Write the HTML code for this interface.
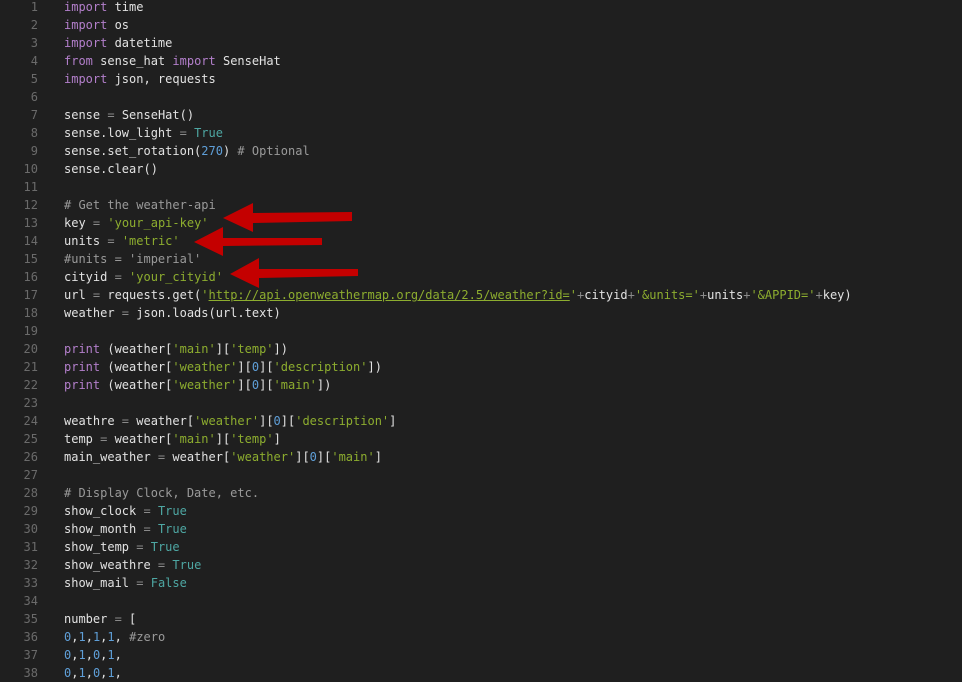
<!DOCTYPE html>
<html><head><meta charset="utf-8"><style>
body{margin:0;width:962px;height:674px;background:#1f1f1f;overflow:hidden;position:relative}
pre{margin:0;position:absolute;left:0;top:-2px;font-family:"DejaVu Sans Mono","Liberation Mono",monospace;font-size:12px;line-height:18px;color:#e2e2e2;}
.l{display:block;height:18px;white-space:pre}
.ln{display:inline-block;width:38px;text-align:right;color:#6b6b6b;margin-right:26px}
.k{color:#b37fcb}.s{color:#8dad2f}.n{color:#5f9fd8}.c{color:#4ea7a3}.o{color:#8a8a8a}.m{color:#9a9a9a}
.u{text-decoration:underline}
svg{position:absolute;left:0;top:0}
</style></head><body>
<pre><span class="l"><span class="ln">1</span><span class="k">import</span> time</span><span class="l"><span class="ln">2</span><span class="k">import</span> os</span><span class="l"><span class="ln">3</span><span class="k">import</span> datetime</span><span class="l"><span class="ln">4</span><span class="k">from</span> sense_hat <span class="k">import</span> SenseHat</span><span class="l"><span class="ln">5</span><span class="k">import</span> json, requests</span><span class="l"><span class="ln">6</span></span><span class="l"><span class="ln">7</span>sense <span class="o">=</span> SenseHat()</span><span class="l"><span class="ln">8</span>sense.low_light <span class="o">=</span> <span class="c">True</span></span><span class="l"><span class="ln">9</span>sense.set_rotation(<span class="n">270</span>) <span class="m"># Optional</span></span><span class="l"><span class="ln">10</span>sense.clear()</span><span class="l"><span class="ln">11</span></span><span class="l"><span class="ln">12</span><span class="m"># Get the weather-api</span></span><span class="l"><span class="ln">13</span>key <span class="o">=</span> <span class="s">'your_api-key'</span></span><span class="l"><span class="ln">14</span>units <span class="o">=</span> <span class="s">'metric'</span></span><span class="l"><span class="ln">15</span><span class="m">#units = 'imperial'</span></span><span class="l"><span class="ln">16</span>cityid <span class="o">=</span> <span class="s">'your_cityid'</span></span><span class="l"><span class="ln">17</span>url <span class="o">=</span> requests.get(<span class="s">'<span class="u">http://api.openweathermap.org/data/2.5/weather?id=</span>'</span><span class="o">+</span>cityid<span class="o">+</span><span class="s">'&amp;units='</span><span class="o">+</span>units<span class="o">+</span><span class="s">'&amp;APPID='</span><span class="o">+</span>key)</span><span class="l"><span class="ln">18</span>weather <span class="o">=</span> json.loads(url.text)</span><span class="l"><span class="ln">19</span></span><span class="l"><span class="ln">20</span><span class="k">print</span> (weather[<span class="s">'main'</span>][<span class="s">'temp'</span>])</span><span class="l"><span class="ln">21</span><span class="k">print</span> (weather[<span class="s">'weather'</span>][<span class="n">0</span>][<span class="s">'description'</span>])</span><span class="l"><span class="ln">22</span><span class="k">print</span> (weather[<span class="s">'weather'</span>][<span class="n">0</span>][<span class="s">'main'</span>])</span><span class="l"><span class="ln">23</span></span><span class="l"><span class="ln">24</span>weathre <span class="o">=</span> weather[<span class="s">'weather'</span>][<span class="n">0</span>][<span class="s">'description'</span>]</span><span class="l"><span class="ln">25</span>temp <span class="o">=</span> weather[<span class="s">'main'</span>][<span class="s">'temp'</span>]</span><span class="l"><span class="ln">26</span>main_weather <span class="o">=</span> weather[<span class="s">'weather'</span>][<span class="n">0</span>][<span class="s">'main'</span>]</span><span class="l"><span class="ln">27</span></span><span class="l"><span class="ln">28</span><span class="m"># Display Clock, Date, etc.</span></span><span class="l"><span class="ln">29</span>show_clock <span class="o">=</span> <span class="c">True</span></span><span class="l"><span class="ln">30</span>show_month <span class="o">=</span> <span class="c">True</span></span><span class="l"><span class="ln">31</span>show_temp <span class="o">=</span> <span class="c">True</span></span><span class="l"><span class="ln">32</span>show_weathre <span class="o">=</span> <span class="c">True</span></span><span class="l"><span class="ln">33</span>show_mail <span class="o">=</span> <span class="c">False</span></span><span class="l"><span class="ln">34</span></span><span class="l"><span class="ln">35</span>number <span class="o">=</span> [</span><span class="l"><span class="ln">36</span><span class="n">0</span>,<span class="n">1</span>,<span class="n">1</span>,<span class="n">1</span>, <span class="m">#zero</span></span><span class="l"><span class="ln">37</span><span class="n">0</span>,<span class="n">1</span>,<span class="n">0</span>,<span class="n">1</span>,</span><span class="l"><span class="ln">38</span><span class="n">0</span>,<span class="n">1</span>,<span class="n">0</span>,<span class="n">1</span>,</span></pre>
<svg width="962" height="674">
<g fill="#c40000">
<polygon points="223,218 253,203 253,213 352,212 352,221 253,223 253,232"/>
<polygon points="194,242 223,227 223,238 322,238 322,245 223,246 223,256"/>
<polygon points="230,274 259,258 259,269 358,269 358,276 259,278 259,288"/>
</g>
</svg>
</body></html>
